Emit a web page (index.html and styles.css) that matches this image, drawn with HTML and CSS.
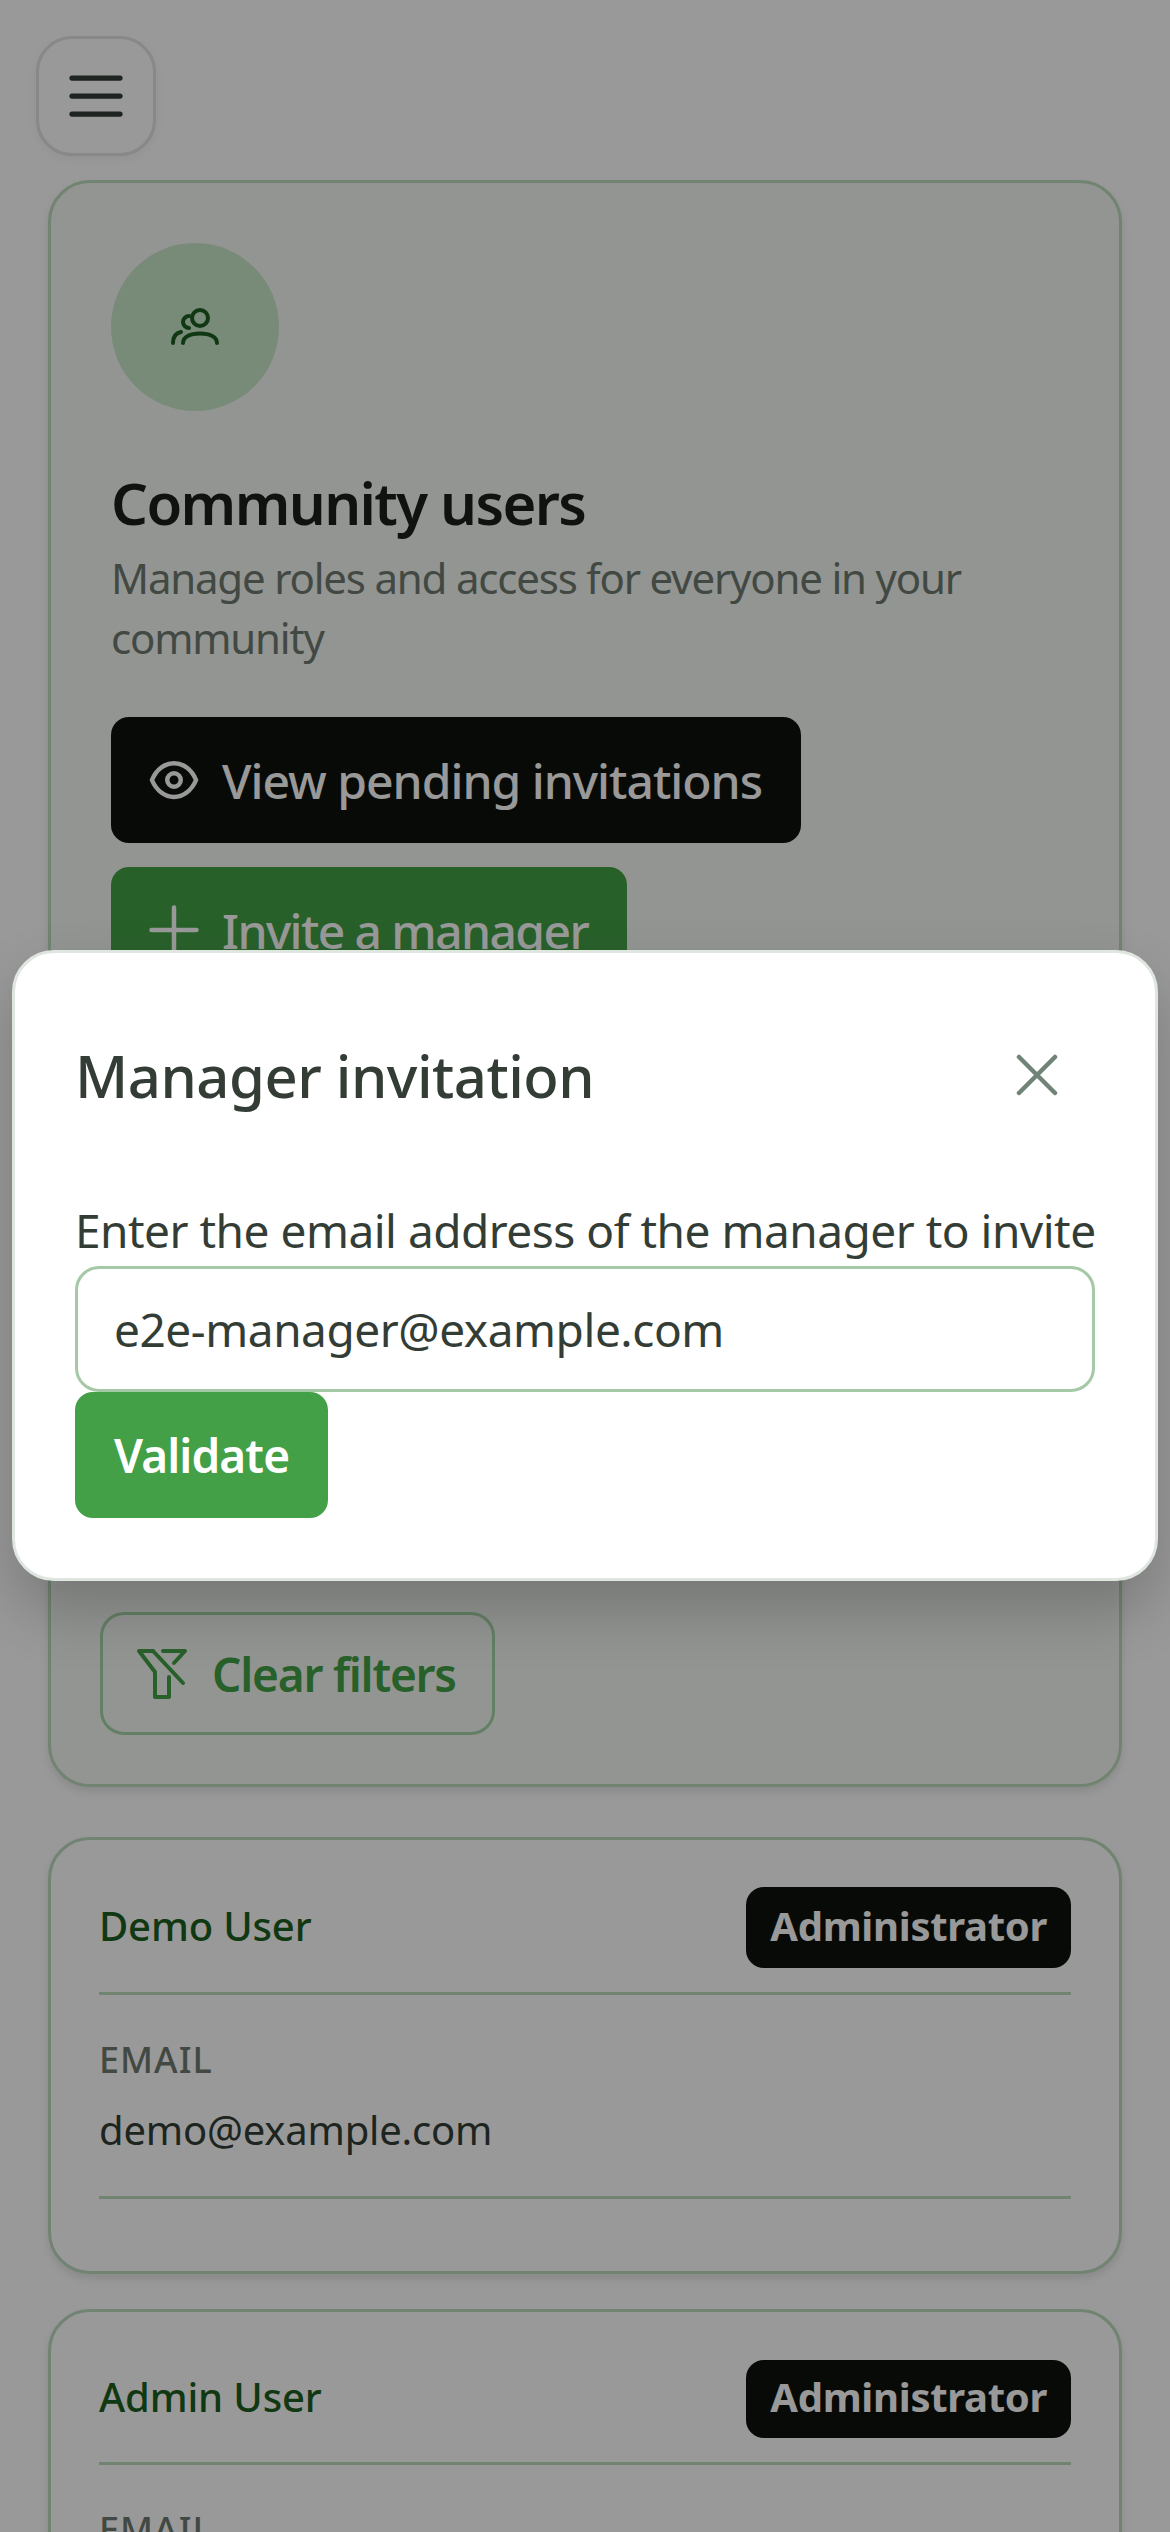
FILE: index.html
```html
<!DOCTYPE html>
<html lang="en">

<head>
    <meta charset="UTF-8">
    <title>Community users</title>
    <link rel="stylesheet" href="styles.css">
</head>

<body>
    <div class="page">
        <button class="menu-btn">
            <svg width="72" height="72" viewBox="0 0 24 24" class="line-icon">
                <path d="M4 6h16M4 12h16M4 18h16" />
            </svg>
        </button>

        <section class="card head-card">
            <div class="avatar">
                <svg width="54" height="42" viewBox="168 306 54 42" class="users-icon">
                    <circle cx="200" cy="318" r="8" />
                    <path d="M183 343c0-6 7-9.500 17-9.500s17 3.500 17 9.500" />
                    <path d="M189 316c-3 0-6 2.500-6 6s3 6 6 6" />
                    <path d="M173 343c0-6 3-10 8-11" />
                </svg>
            </div>
            <h1>Community users</h1>
            <p class="intro">Manage roles and access for everyone in your community</p>
            <div class="actions">
                <button class="btn btn-dark">
                    <svg width="54" height="54" viewBox="0 0 24 24" class="line-icon">
                        <path d="M2.200 12C4.200 7.200 8 4.500 12 4.500s7.800 2.700 9.800 7.500c-2 4.800-5.800 7.500-9.800 7.500s-7.800-2.700-9.800-7.500z" />
                        <circle cx="12" cy="12" r="3" />
                    </svg>
                    View pending invitations
                </button>
                <button class="btn btn-green">
                    <svg width="54" height="54" viewBox="0 0 24 24" class="line-icon">
                        <path d="M12 2v20M2 12h20" />
                    </svg>
                    Invite a manager
                </button>
            </div>
            <div class="filters">
                <button class="btn btn-outline">
                    <svg width="52" height="52" viewBox="136 1648 52 52" class="line-icon funnel-icon">
                        <path d="M153 1651h-14l16 21v25h14v-20" />
                        <path d="M163 1651h22l-11 12" />
                        <path d="M153 1651l30 32" />
                    </svg>
                    Clear filters
                </button>
            </div>
        </section>

        <section class="card user-card">
            <div class="user-top">
                <span class="user-name">Demo User</span>
                <span class="badge">Administrator</span>
            </div>
            <div class="user-field">
                <div class="field-label">EMAIL</div>
                <div class="field-value">demo@example.com</div>
            </div>
        </section>

        <section class="card user-card">
            <div class="user-top">
                <span class="user-name">Admin User</span>
                <span class="badge">Administrator</span>
            </div>
            <div class="user-field">
                <div class="field-label">EMAIL</div>
            </div>
        </section>
    </div>

    <div class="overlay"></div>

    <div class="modal">
        <div class="modal-head">
            <h2>Manager invitation</h2>
            <svg width="72" height="72" viewBox="0 0 24 24" class="close-icon">
                <path d="M6 6l12 12M18 6L6 18" />
            </svg>
        </div>
        <label class="modal-label">Enter the email address of the manager to invite</label>
        <div class="modal-input">e2e-manager@example.com</div>
        <button class="btn btn-validate">Validate</button>
    </div>
</body>

</html>
```

FILE: styles.css
```css
* {
    padding: 0;
    margin: 0;
    box-sizing: border-box;
}

html,
body {
    height: 2532px;
    overflow: hidden;
}

body {
    position: relative;
    background: #fff;
    font-family: "Noto Sans", "Open Sans", sans-serif;
    color: #1c211c;
}

button {
    font-family: inherit;
}

.page {
    padding: 36px 48px 0;
}

.line-icon {
    fill: none;
    stroke: currentColor;
    stroke-width: 2;
    stroke-linecap: round;
    stroke-linejoin: round;
    flex-shrink: 0;
}

.funnel-icon {
    stroke-width: 4;
}

.menu-btn {
    display: flex;
    align-items: center;
    justify-content: center;
    width: 120px;
    height: 120px;
    margin-left: -12px;
    border: 3px solid #dfe5df;
    border-radius: 36px;
    background: #fff;
    color: #333d35;
    box-shadow: 0 3px 9px rgba(0, 0, 0, 0.05);
}

.menu-btn .line-icon {
    stroke-width: 1.75;
}

.card {
    border: 3px solid #bcdcbd;
    border-radius: 42px;
    background: #fff;
    box-shadow: 0 5px 9px rgba(0, 0, 0, 0.1);
}

.head-card {
    height: 1607px;
    margin-top: 24px;
    margin-bottom: 50px;
    padding: 60px;
    background: #f6f8f5;
}

.avatar {
    display: flex;
    align-items: center;
    justify-content: center;
    width: 168px;
    height: 168px;
    border-radius: 50%;
    background: #c8e6c9;
}

.users-icon {
    fill: none;
    stroke: #1b5e20;
    stroke-width: 4;
    stroke-linecap: round;
}

h1 {
    margin-top: 56px;
    font-size: 58px;
    line-height: 72px;
    font-weight: 600;
    letter-spacing: -1.6px;
    color: #1a1f1a;
}

.intro {
    margin-top: 9px;
    font-size: 42px;
    line-height: 60px;
    letter-spacing: -1.2px;
    color: #6f7a70;
}

.actions {
    display: flex;
    flex-direction: column;
    align-items: flex-start;
    gap: 24px;
    margin-top: 49px;
}

.btn {
    display: inline-flex;
    align-items: center;
    gap: 21px;
    height: 126px;
    padding: 0 39px 0 36px;
    border: 0;
    border-radius: 18px;
    font-size: 48px;
    font-weight: 500;
    letter-spacing: -1px;
}

.btn-dark {
    background: #0c110b;
    color: #fff;
}

.btn-green {
    background: #43a047;
    color: #fff;
    letter-spacing: -1.6px;
}

.filters {
    margin: 619px 0 0 -11px;
}

.btn-outline {
    border: 3px solid #a5d6a7;
    border-radius: 24px;
    background: transparent;
    color: #43a047;
    padding: 0 36px 0 33px;
    height: 123px;
    gap: 24px;
    font-size: 46px;
    font-weight: 600;
    letter-spacing: -1.2px;
}

.user-card {
    padding: 47px 48px 72px;
}

.user-card + .user-card {
    margin-top: 35px;
    padding-top: 48px;
}

.user-card + .user-card .badge {
    padding: 8px 24px 12px;
}

.user-top {
    display: flex;
    align-items: center;
    justify-content: space-between;
    padding-bottom: 24px;
    border-bottom: 3px solid #bcdcbd;
}

.user-name {
    padding-bottom: 5px;
    font-size: 40px;
    font-weight: 500;
    letter-spacing: -0.15px;
    color: #1b5e20;
}

.badge {
    padding: 9.500px 24px 13.500px;
    border-radius: 18px;
    background: #0c110b;
    color: #fff;
    font-size: 40px;
    line-height: 58px;
    font-weight: 700;
    letter-spacing: -0.3px;
}

.user-field {
    padding: 38px 0 36px;
    border-bottom: 3px solid #bcdcbd;
}

.field-label {
    font-size: 36px;
    line-height: 54px;
    font-weight: 500;
    letter-spacing: 1px;
    color: #6f7a70;
}

.field-value {
    margin-top: 13px;
    font-size: 40px;
    line-height: 60px;
    letter-spacing: -0.2px;
    color: #333d35;
}

.overlay {
    position: absolute;
    left: 0;
    top: 0;
    width: 100%;
    height: 100%;
    background: rgba(0, 0, 0, 0.4);
}

.modal {
    position: absolute;
    left: 12px;
    top: 950px;
    width: 1146px;
    height: 631px;
    padding: 60px;
    border: 3px solid #dfe5df;
    border-radius: 42px;
    background: #fff;
    box-shadow: 0 30px 60px rgba(0, 0, 0, 0.2);
}

.modal-head {
    display: flex;
    align-items: center;
    justify-content: space-between;
    padding-right: 22px;
    padding-bottom: 2px;
    height: 126px;
}

h2 {
    font-size: 58px;
    font-weight: 500;
    letter-spacing: -0.5px;
    color: #333d35;
}

.close-icon {
    fill: none;
    stroke: #6f8376;
    stroke-width: 1.5;
    stroke-linecap: round;
}

.modal-label {
    display: block;
    margin-top: 58px;
    margin-bottom: 3px;
    font-size: 46px;
    line-height: 66px;
    letter-spacing: -0.5px;
    white-space: nowrap;
    color: #333d35;
}

.modal-input {
    display: flex;
    align-items: center;
    height: 126px;
    padding: 0 36px;
    border: 3px solid #a5c8a6;
    border-radius: 24px;
    font-size: 46px;
    letter-spacing: -0.45px;
    color: #333d35;
}

.btn-validate {
    display: flex;
    padding: 0 39px;
    background: #43a047;
    color: #fff;
    font-size: 46px;
    font-weight: 600;
    letter-spacing: -0.9px;
}
```
